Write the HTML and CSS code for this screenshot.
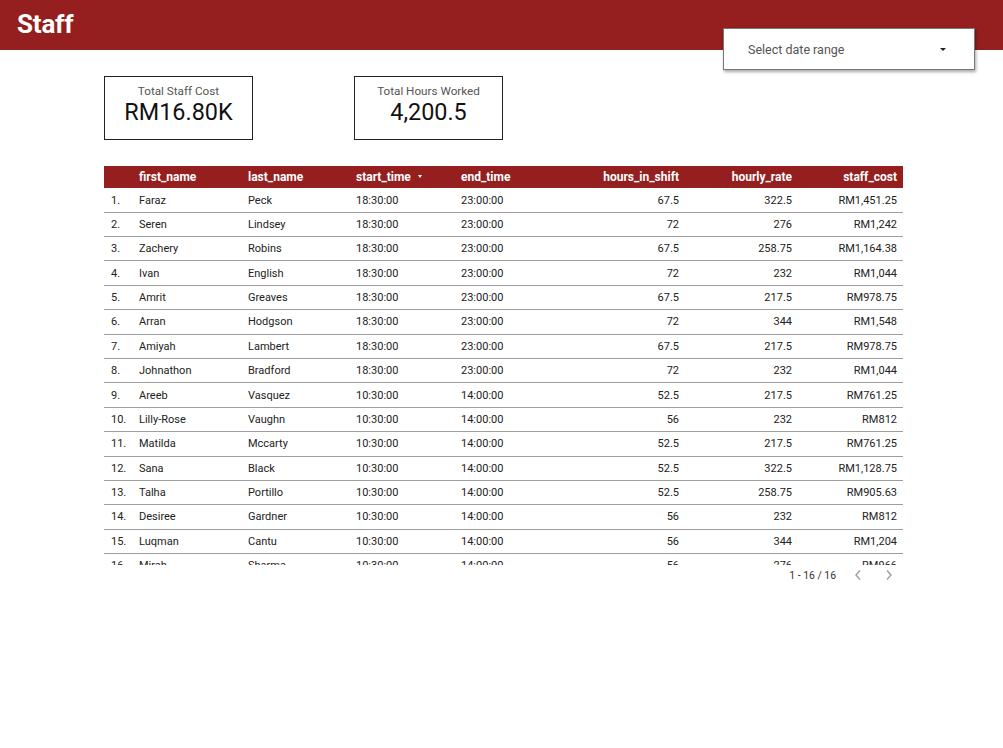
FILE: index.html
```html
<!DOCTYPE html>
<html>
<head>
<meta charset="utf-8">
<link rel="stylesheet" href="styles.css">
</head>
<body>
<header class="topbar">
  <h1 class="title">Staff</h1>
  <div class="date-select">
    <span>Select date range</span>
    <span class="caret"></span>
  </div>
</header>
<main class="content">
  <section class="kpis">
    <div class="kpi">
      <div class="kpi-label">Total Staff Cost</div>
      <div class="kpi-value">RM16.80K</div>
    </div>
    <div class="kpi">
      <div class="kpi-label">Total Hours Worked</div>
      <div class="kpi-value">4,200.5</div>
    </div>
  </section>
  <section class="table">
    <div class="row head">
      <div></div>
      <div>first_name</div>
      <div>last_name</div>
      <div class="sorted">start_time <span class="sort-caret"></span></div>
      <div>end_time</div>
      <div class="num">hours_in_shift</div>
      <div class="num">hourly_rate</div>
      <div class="num last">staff_cost</div>
    </div>
    <div class="body" id="body"></div>
    <div class="pager">
      <span class="pager-text">1 - 16 / 16</span>
      <svg class="chev prev" width="10" height="12" viewBox="0 0 10 12"><path d="M7 1.5 L3 6 L7 10.5" fill="none" stroke="#9e9e9e" stroke-width="1.4"/></svg>
      <svg class="chev next" width="10" height="12" viewBox="0 0 10 12"><path d="M3 1.5 L7 6 L3 10.5" fill="none" stroke="#9e9e9e" stroke-width="1.4"/></svg>
    </div>
  </section>
</main>
<script>
const rows = [
["Faraz","Peck","18:30:00","23:00:00","67.5","322.5","RM1,451.25"],
["Seren","Lindsey","18:30:00","23:00:00","72","276","RM1,242"],
["Zachery","Robins","18:30:00","23:00:00","67.5","258.75","RM1,164.38"],
["Ivan","English","18:30:00","23:00:00","72","232","RM1,044"],
["Amrit","Greaves","18:30:00","23:00:00","67.5","217.5","RM978.75"],
["Arran","Hodgson","18:30:00","23:00:00","72","344","RM1,548"],
["Amiyah","Lambert","18:30:00","23:00:00","67.5","217.5","RM978.75"],
["Johnathon","Bradford","18:30:00","23:00:00","72","232","RM1,044"],
["Areeb","Vasquez","10:30:00","14:00:00","52.5","217.5","RM761.25"],
["Lilly-Rose","Vaughn","10:30:00","14:00:00","56","232","RM812"],
["Matilda","Mccarty","10:30:00","14:00:00","52.5","217.5","RM761.25"],
["Sana","Black","10:30:00","14:00:00","52.5","322.5","RM1,128.75"],
["Talha","Portillo","10:30:00","14:00:00","52.5","258.75","RM905.63"],
["Desiree","Gardner","10:30:00","14:00:00","56","232","RM812"],
["Luqman","Cantu","10:30:00","14:00:00","56","344","RM1,204"],
["Mirah","Sharma","10:30:00","14:00:00","56","276","RM966"]
];
const body = document.getElementById('body');
rows.forEach((r, i) => {
  const row = document.createElement('div');
  row.className = 'row';
  const cells = [(i + 1) + '.', ...r];
  cells.forEach((c, j) => {
    const d = document.createElement('div');
    d.textContent = c;
    if (j >= 5) d.className = 'num';
    if (j === 7) d.className = 'num last';
    row.appendChild(d);
  });
  body.appendChild(row);
});
</script>
</body>
</html>
```

FILE: styles.css
```css
* { box-sizing: border-box; }
html, body { margin: 0; padding: 0; background: #fff; }
body { font-family: Roboto, "Liberation Sans", sans-serif; color: #212121; width: 1003px; height: 748px; overflow: hidden; position: relative; }

.topbar { height: 50px; background: #951e1e; position: relative; }
.title { margin: 0; padding-left: 17px; line-height: 48px; font-size: 26px; font-weight: 700; color: #fff; letter-spacing: -0.2px; }

.date-select {
  position: absolute; left: 723px; top: 28px; width: 252px; height: 42px;
  background: #fff; border: 1px solid #777;
  box-shadow: 1px 2px 3px rgba(0,0,0,0.35);
  display: flex; align-items: center; justify-content: space-between;
  padding: 0 28px 0 24px; font-size: 12.5px; color: #555;
}
.caret { width: 0; height: 0; border-left: 3px solid transparent; border-right: 3px solid transparent; border-top: 3px solid #222; }

.content { padding: 26px 0 0 104px; }
.kpis { display: flex; gap: 101px; }
.kpi { width: 149px; height: 64px; border: 1px solid #222; text-align: center; padding-top: 7px; }
.kpi-label { font-size: 11.7px; color: #555; line-height: 14px; }
.kpi-value { font-size: 23.4px; color: #111; line-height: 28px; }

.table { width: 799px; margin-top: 26px; }
.row { display: grid; grid-template-columns: 28px 109px 108px 105px 106px 126px 113px 104px; align-items: center; height: 24.4px; border-bottom: 1px solid #9e9e9e; font-size: 11px; color: #222; }
.body .row:first-child { height: 24.6px; padding-top: 0.6px; }
.row > div { padding-left: 7px; white-space: nowrap; overflow: hidden; }
.row > .num { text-align: right; padding-left: 0; padding-right: 7px; }
.row > .num.last { padding-right: 6px; }
.row.head { height: 22px; background: #951e1e; color: #fff; font-weight: 700; font-size: 12px; border-bottom: none; }
.sort-caret { display: inline-block; width: 0; height: 0; border-left: 2.5px solid transparent; border-right: 2.5px solid transparent; border-top: 3px solid #fff; vertical-align: middle; margin-left: 4px; margin-bottom: 2px; }
.body { height: 377px; overflow: hidden; }

.pager { display: flex; justify-content: flex-end; align-items: center; height: 20px; padding-right: 9px; font-size: 10.4px; color: #333; }
.pager-text { margin-right: 17px; }
.chev.prev { margin-right: 21px; }
```
